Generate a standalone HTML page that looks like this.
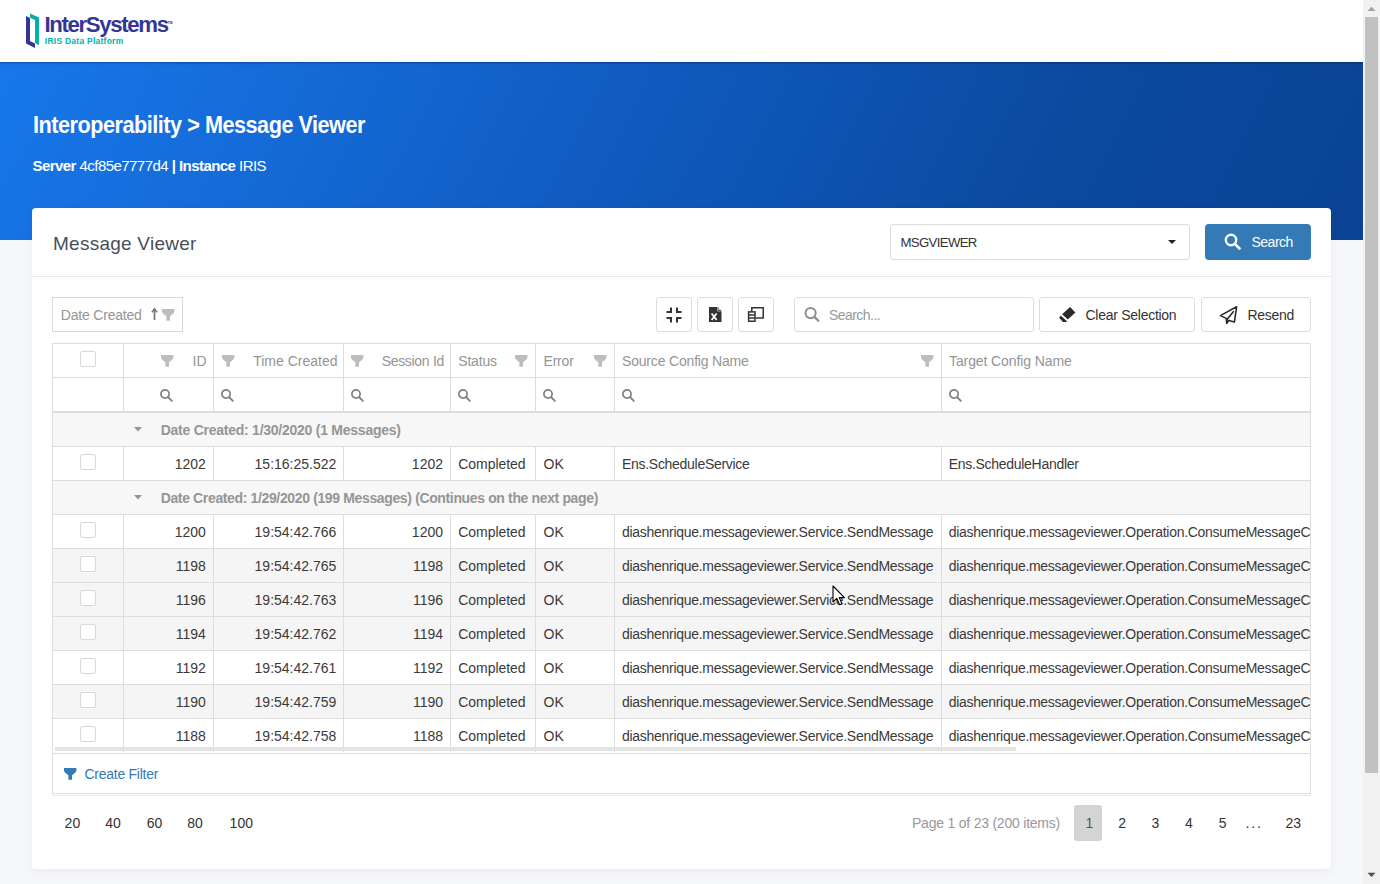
<!DOCTYPE html><html><head><meta charset="utf-8"><style>
*{box-sizing:border-box;margin:0;padding:0}
html,body{width:1380px;height:884px;overflow:hidden}
body{font-family:"Liberation Sans",sans-serif;background:#f5f7fa;position:relative;color:#3a3a3a}
.a{position:absolute}
.t{position:absolute;line-height:1;white-space:nowrap}
</style></head><body>
<div class="a" style="left:0px;top:0px;width:1363px;height:62px;background:#fff"></div>
<svg class="a" style="left:24px;top:12px" width="17" height="38" viewBox="0 0 17 38"><path d="M2,4 L6,6 L6,29 L11,31.6 L11,36 L2,31.6 Z" fill="#333695"/><path d="M6,1.6 L15,5.4 L15,33 L11,31 L11,8 L6,5.8 Z" fill="#00b2a9"/></svg>
<div class="t" style="left:44.5px;top:14.01px;font-size:22.2px;color:#333695;font-weight:700;letter-spacing:-1.35px;">InterSystems</div>
<div class="t" style="left:167.8px;top:22.12px;font-size:3.4px;color:#333695;font-weight:700;">TM</div>
<div class="t" style="left:44.8px;top:37.40px;font-size:8.5px;color:#00b2a9;font-weight:700;letter-spacing:0.25px;">IRIS Data Platform</div>
<div class="a" style="left:0px;top:62px;width:1363px;height:178px;background:linear-gradient(117deg,#1777e9 0%,#1468d4 25%,#0f58bb 50%,#0b4aa0 75%,#0a4393 100%)"></div>
<div class="a" style="left:0px;top:62px;width:1363px;height:3px;background:linear-gradient(rgba(0,0,0,.25),rgba(0,0,0,0))"></div>
<div class="t" style="left:32.5px;top:113.63px;font-size:23px;color:#fff;font-weight:700;letter-spacing:-0.5px;transform:scaleX(0.94);transform-origin:0 0;">Interoperability &gt; Message Viewer</div>
<div class="t" style="left:32.5px;top:158.30px;font-size:15px;color:#fff;letter-spacing:-0.55px;"><b>Server</b> 4cf85e7777d4 <b>|</b> <b>Instance</b> IRIS</div>
<div class="a" style="left:32px;top:208px;width:1299px;height:661px;background:#fff;border-radius:4px;box-shadow:0 3px 10px rgba(0,0,0,.05)"></div>
<div class="t" style="left:53px;top:233.62px;font-size:19px;color:#4a4f57;letter-spacing:0.25px;">Message Viewer</div>
<div class="a" style="left:32px;top:276px;width:1299px;height:1px;background:#e9e9e9"></div>
<div class="a" style="left:890px;top:224px;width:300px;height:36px;border:1px solid #ddd;border-radius:3px;background:#fff"></div>
<div class="t" style="left:900.5px;top:235.63px;font-size:13.2px;color:#333;letter-spacing:-0.65px;">MSGVIEWER</div>
<svg class="a" style="left:1168px;top:240px" width="8" height="4" viewBox="0 0 8 4"><path d="M0,0 H8 L4,4 Z" fill="#222"/></svg>
<div class="a" style="left:1205px;top:224px;width:106px;height:36px;background:#337ab7;border-radius:4px"></div>
<svg class="a" style="left:1224px;top:233px" width="17" height="17" viewBox="0 0 17 17"><circle cx="7" cy="7" r="5.2" fill="none" stroke="#fff" stroke-width="2.4"/><path d="M10.8,10.8 L15.5,15.5" stroke="#fff" stroke-width="2.6" stroke-linecap="round"/></svg>
<div class="t" style="left:1251.5px;top:235.15px;font-size:14px;color:#fff;letter-spacing:-0.5px;">Search</div>
<div class="a" style="left:52px;top:297px;width:131px;height:35px;border:1px solid #d8d8d8;background:#fff"></div>
<div class="t" style="left:60.8px;top:307.95px;font-size:14px;color:#959595;letter-spacing:-0.2px;">Date Created</div>
<svg class="a" style="left:150px;top:307px" width="9" height="14" viewBox="0 0 9 14"><path d="M4.5,2.5 V13" stroke="#777" stroke-width="1.7"/><path d="M1.9,5.2 L4.5,1.8 L7.1,5.2" fill="none" stroke="#777" stroke-width="1.6"/></svg>
<svg class="a" style="left:162px;top:309px" width="13" height="12" viewBox="0 0 13 12"><path d="M0,0 H12.4 V2.9 Q11.6,4.6 8,7.2 V11.7 H4.4 V7.2 Q0.8,4.6 0,2.9 Z" fill="#bdbdbd"/></svg>
<div class="a" style="left:656px;top:297px;width:36px;height:35px;border:1px solid #ddd;border-radius:3px;background:#fff"></div>
<div class="a" style="left:697px;top:297px;width:36px;height:35px;border:1px solid #ddd;border-radius:3px;background:#fff"></div>
<div class="a" style="left:738px;top:297px;width:36px;height:35px;border:1px solid #ddd;border-radius:3px;background:#fff"></div>
<svg class="a" style="left:666px;top:307px" width="16" height="16" viewBox="0 0 16 16"><g fill="none" stroke="#333" stroke-width="2"><path d="M5,0.5 V5 H0.5"/><path d="M11,0.5 V5 H15.5"/><path d="M5,15.5 V11 H0.5"/><path d="M11,15.5 V11 H15.5"/></g></svg>
<svg class="a" style="left:709px;top:307px" width="13" height="15" viewBox="0 0 13 15"><path d="M0,0 H8.5 L12.5,4 V15 H0 Z" fill="#333"/><path d="M8.5,0 V4 H12.5" fill="#fff" stroke="#fff" stroke-width="0.8"/><path d="M9,0.5 V3.6 H12" fill="none" stroke="#333" stroke-width="1"/><path d="M2.6,6.5 L7.6,13 M7.6,6.5 L2.6,13" stroke="#fff" stroke-width="1.8"/></svg>
<svg class="a" style="left:747px;top:306px" width="17" height="17" viewBox="0 0 17 17"><g fill="none" stroke="#333" stroke-width="1.5"><path d="M4.8,5.4 V1.8 H16.2 V12 H8.6"/><rect x="1.6" y="5.9" width="6.4" height="9.3"/><path d="M1.6,9 H8 M1.6,12.1 H8"/></g></svg>
<div class="a" style="left:794px;top:297px;width:240px;height:35px;border:1px solid #ddd;border-radius:3px;background:#fff"></div>
<svg class="a" style="left:804px;top:306px" width="16" height="17" viewBox="0 0 16 17"><circle cx="6.6" cy="7.1" r="5.1" fill="none" stroke="#8e8e8e" stroke-width="2"/><path d="M10.4,10.9 L14.3,14.8" stroke="#8e8e8e" stroke-width="2.2" stroke-linecap="round"/></svg>
<div class="t" style="left:829px;top:308.15px;font-size:14px;color:#999;letter-spacing:-0.55px;">Search...</div>
<div class="a" style="left:1039px;top:297px;width:156px;height:35px;border:1px solid #ddd;border-radius:3px;background:#fff"></div>
<svg class="a" style="left:1058px;top:306px" width="19" height="17" viewBox="0 0 19 17"><path d="M12.05,0.97 L17.4,6.5 L9.8,13.6 L4.1,8.3 Z" fill="#2b2b2b"/><path d="M1,11.4 L2.9,9.8 L8.2,14.6 L8.9,15.9 L4.8,15.9 Z" fill="#2b2b2b"/></svg>
<div class="t" style="left:1085.5px;top:308.15px;font-size:14px;color:#333;letter-spacing:-0.27px;">Clear Selection</div>
<div class="a" style="left:1201px;top:297px;width:110px;height:35px;border:1px solid #ddd;border-radius:3px;background:#fff"></div>
<svg class="a" style="left:1219px;top:305px" width="20" height="20" viewBox="0 0 20 20"><g fill="none" stroke="#2b2b2b" stroke-width="1.6" stroke-linejoin="round" stroke-linecap="round"><path d="M17.6,1.8 L1.4,10.6 L7.2,13.4 L7.7,18.2 L10,15.4 L15.4,17.1 Z"/><path d="M14.3,6.7 L8.2,14.2 L7.7,18.2"/></g></svg>
<div class="t" style="left:1247.5px;top:308.15px;font-size:14px;color:#333;letter-spacing:-0.3px;">Resend</div>
<div class="a" style="left:52px;top:343px;width:1259px;height:70px;background:#fff"></div>
<div class="a" style="left:52px;top:343px;width:1259px;height:1px;background:#dddddd"></div>
<div class="a" style="left:52px;top:377px;width:1259px;height:1px;background:#dddddd"></div>
<div class="a" style="left:52px;top:411px;width:1259px;height:2px;background:#dddddd"></div>
<div class="a" style="left:52px;top:343px;width:1px;height:70px;background:#dddddd"></div>
<div class="a" style="left:123px;top:343px;width:1px;height:70px;background:#dddddd"></div>
<div class="a" style="left:213px;top:343px;width:1px;height:70px;background:#dddddd"></div>
<div class="a" style="left:343px;top:343px;width:1px;height:70px;background:#dddddd"></div>
<div class="a" style="left:450px;top:343px;width:1px;height:70px;background:#dddddd"></div>
<div class="a" style="left:535px;top:343px;width:1px;height:70px;background:#dddddd"></div>
<div class="a" style="left:614px;top:343px;width:1px;height:70px;background:#dddddd"></div>
<div class="a" style="left:941px;top:343px;width:1px;height:70px;background:#dddddd"></div>
<div class="a" style="left:80px;top:351px;width:16px;height:16px;border:1px solid #d9d9d9;border-radius:2px;background:#fff"></div>
<svg class="a" style="left:160.5px;top:355px" width="13" height="12" viewBox="0 0 13 12"><path d="M0,0 H12.4 V2.9 Q11.6,4.6 8,7.2 V11.7 H4.4 V7.2 Q0.8,4.6 0,2.9 Z" fill="#bdbdbd"/></svg>
<div class="t" style="right:1173.5px;top:354.15px;font-size:14px;color:#959595;">ID</div>
<svg class="a" style="left:221.5px;top:355px" width="13" height="12" viewBox="0 0 13 12"><path d="M0,0 H12.4 V2.9 Q11.6,4.6 8,7.2 V11.7 H4.4 V7.2 Q0.8,4.6 0,2.9 Z" fill="#bdbdbd"/></svg>
<div class="t" style="right:1042.5px;top:354.15px;font-size:14px;color:#959595;">Time Created</div>
<svg class="a" style="left:351.3px;top:355px" width="13" height="12" viewBox="0 0 13 12"><path d="M0,0 H12.4 V2.9 Q11.6,4.6 8,7.2 V11.7 H4.4 V7.2 Q0.8,4.6 0,2.9 Z" fill="#bdbdbd"/></svg>
<div class="t" style="right:936px;top:354.15px;font-size:14px;color:#959595;letter-spacing:-0.3px;">Session Id</div>
<div class="t" style="left:458.3px;top:354.15px;font-size:14px;color:#959595;letter-spacing:-0.2px;">Status</div>
<svg class="a" style="left:514.8px;top:355px" width="13" height="12" viewBox="0 0 13 12"><path d="M0,0 H12.4 V2.9 Q11.6,4.6 8,7.2 V11.7 H4.4 V7.2 Q0.8,4.6 0,2.9 Z" fill="#bdbdbd"/></svg>
<div class="t" style="left:543.5px;top:354.15px;font-size:14px;color:#959595;letter-spacing:-0.2px;">Error</div>
<svg class="a" style="left:593.5px;top:355px" width="13" height="12" viewBox="0 0 13 12"><path d="M0,0 H12.4 V2.9 Q11.6,4.6 8,7.2 V11.7 H4.4 V7.2 Q0.8,4.6 0,2.9 Z" fill="#bdbdbd"/></svg>
<div class="t" style="left:622px;top:354.15px;font-size:14px;color:#959595;letter-spacing:-0.18px;">Source Config Name</div>
<svg class="a" style="left:920.5px;top:355px" width="13" height="12" viewBox="0 0 13 12"><path d="M0,0 H12.4 V2.9 Q11.6,4.6 8,7.2 V11.7 H4.4 V7.2 Q0.8,4.6 0,2.9 Z" fill="#bdbdbd"/></svg>
<div class="t" style="left:949px;top:354.15px;font-size:14px;color:#959595;letter-spacing:-0.1px;">Target Config Name</div>
<svg class="a" style="left:159.5px;top:389px" width="13" height="13" viewBox="0 0 13 13"><circle cx="5" cy="5" r="4.1" fill="none" stroke="#808080" stroke-width="1.7"/><path d="M8,8 L11.8,11.8" stroke="#808080" stroke-width="1.9" stroke-linecap="round"/></svg>
<svg class="a" style="left:221px;top:389px" width="13" height="13" viewBox="0 0 13 13"><circle cx="5" cy="5" r="4.1" fill="none" stroke="#808080" stroke-width="1.7"/><path d="M8,8 L11.8,11.8" stroke="#808080" stroke-width="1.9" stroke-linecap="round"/></svg>
<svg class="a" style="left:350.6px;top:389px" width="13" height="13" viewBox="0 0 13 13"><circle cx="5" cy="5" r="4.1" fill="none" stroke="#808080" stroke-width="1.7"/><path d="M8,8 L11.8,11.8" stroke="#808080" stroke-width="1.9" stroke-linecap="round"/></svg>
<svg class="a" style="left:457.8px;top:389px" width="13" height="13" viewBox="0 0 13 13"><circle cx="5" cy="5" r="4.1" fill="none" stroke="#808080" stroke-width="1.7"/><path d="M8,8 L11.8,11.8" stroke="#808080" stroke-width="1.9" stroke-linecap="round"/></svg>
<svg class="a" style="left:542.6px;top:389px" width="13" height="13" viewBox="0 0 13 13"><circle cx="5" cy="5" r="4.1" fill="none" stroke="#808080" stroke-width="1.7"/><path d="M8,8 L11.8,11.8" stroke="#808080" stroke-width="1.9" stroke-linecap="round"/></svg>
<svg class="a" style="left:621.5px;top:389px" width="13" height="13" viewBox="0 0 13 13"><circle cx="5" cy="5" r="4.1" fill="none" stroke="#808080" stroke-width="1.7"/><path d="M8,8 L11.8,11.8" stroke="#808080" stroke-width="1.9" stroke-linecap="round"/></svg>
<svg class="a" style="left:948.5px;top:389px" width="13" height="13" viewBox="0 0 13 13"><circle cx="5" cy="5" r="4.1" fill="none" stroke="#808080" stroke-width="1.7"/><path d="M8,8 L11.8,11.8" stroke="#808080" stroke-width="1.9" stroke-linecap="round"/></svg>
<div class="a" style="left:52px;top:413px;width:1259px;height:339px;overflow:hidden;background:#fff">
<div class="a" style="left:0px;top:0px;width:1259px;height:34px;background:#f7f7f7"></div>
<div class="a" style="left:0px;top:33px;width:1259px;height:1px;background:#dddddd"></div>
<svg class="a" style="left:82.3px;top:13.7px" width="8" height="5" viewBox="0 0 8 5"><path d="M0,0 H8 L4,4.6 Z" fill="#959595"/></svg>
<div class="t" style="left:108.7px;top:10.35px;font-size:14px;color:#959595;font-weight:700;letter-spacing:-0.25px">Date Created: 1/30/2020 (1 Messages)</div>
<div class="a" style="left:0px;top:34px;width:1259px;height:34px;background:#fff"></div>
<div class="a" style="left:0px;top:67px;width:1259px;height:1px;background:#dddddd"></div>
<div class="a" style="left:71px;top:34px;width:1px;height:34px;background:#dddddd"></div>
<div class="a" style="left:161px;top:34px;width:1px;height:34px;background:#dddddd"></div>
<div class="a" style="left:291px;top:34px;width:1px;height:34px;background:#dddddd"></div>
<div class="a" style="left:398px;top:34px;width:1px;height:34px;background:#dddddd"></div>
<div class="a" style="left:483px;top:34px;width:1px;height:34px;background:#dddddd"></div>
<div class="a" style="left:562px;top:34px;width:1px;height:34px;background:#dddddd"></div>
<div class="a" style="left:889px;top:34px;width:1px;height:34px;background:#dddddd"></div>
<div class="a" style="left:28px;top:41px;width:16px;height:16px;border:1px solid #d9d9d9;border-radius:2px;background:#fff"></div>
<div class="t" style="right:1105.2px;top:44.25px;font-size:14px">1202</div>
<div class="t" style="right:974.7px;top:44.25px;font-size:14px">15:16:25.522</div>
<div class="t" style="right:868.0px;top:44.25px;font-size:14px">1202</div>
<div class="t" style="left:406.3px;top:44.25px;font-size:14px;letter-spacing:-0.05px">Completed</div>
<div class="t" style="left:491.5px;top:44.25px;font-size:14px">OK</div>
<div class="t" style="left:570px;top:44.25px;font-size:14px;letter-spacing:-0.29px">Ens.ScheduleService</div>
<div class="a" style="left:889px;top:34px;width:369px;height:33px;overflow:hidden"><div class="t" style="left:7.7px;top:10.25px;font-size:14px;letter-spacing:-0.29px">Ens.ScheduleHandler</div></div>
<div class="a" style="left:0px;top:68px;width:1259px;height:34px;background:#f7f7f7"></div>
<div class="a" style="left:0px;top:101px;width:1259px;height:1px;background:#dddddd"></div>
<svg class="a" style="left:82.3px;top:81.7px" width="8" height="5" viewBox="0 0 8 5"><path d="M0,0 H8 L4,4.6 Z" fill="#959595"/></svg>
<div class="t" style="left:108.7px;top:78.35px;font-size:14px;color:#959595;font-weight:700;letter-spacing:-0.36px">Date Created: 1/29/2020 (199 Messages) (Continues on the next page)</div>
<div class="a" style="left:0px;top:102px;width:1259px;height:34px;background:#fff"></div>
<div class="a" style="left:0px;top:135px;width:1259px;height:1px;background:#dddddd"></div>
<div class="a" style="left:71px;top:102px;width:1px;height:34px;background:#dddddd"></div>
<div class="a" style="left:161px;top:102px;width:1px;height:34px;background:#dddddd"></div>
<div class="a" style="left:291px;top:102px;width:1px;height:34px;background:#dddddd"></div>
<div class="a" style="left:398px;top:102px;width:1px;height:34px;background:#dddddd"></div>
<div class="a" style="left:483px;top:102px;width:1px;height:34px;background:#dddddd"></div>
<div class="a" style="left:562px;top:102px;width:1px;height:34px;background:#dddddd"></div>
<div class="a" style="left:889px;top:102px;width:1px;height:34px;background:#dddddd"></div>
<div class="a" style="left:28px;top:109px;width:16px;height:16px;border:1px solid #d9d9d9;border-radius:2px;background:#fff"></div>
<div class="t" style="right:1105.2px;top:112.25px;font-size:14px">1200</div>
<div class="t" style="right:974.7px;top:112.25px;font-size:14px">19:54:42.766</div>
<div class="t" style="right:868.0px;top:112.25px;font-size:14px">1200</div>
<div class="t" style="left:406.3px;top:112.25px;font-size:14px;letter-spacing:-0.05px">Completed</div>
<div class="t" style="left:491.5px;top:112.25px;font-size:14px">OK</div>
<div class="t" style="left:570px;top:112.25px;font-size:14px;letter-spacing:-0.29px">diashenrique.messageviewer.Service.SendMessage</div>
<div class="a" style="left:889px;top:102px;width:369px;height:33px;overflow:hidden"><div class="t" style="left:7.7px;top:10.25px;font-size:14px;letter-spacing:-0.29px">diashenrique.messageviewer.Operation.ConsumeMessageClass</div></div>
<div class="a" style="left:0px;top:136px;width:1259px;height:34px;background:#f5f5f5"></div>
<div class="a" style="left:0px;top:169px;width:1259px;height:1px;background:#dddddd"></div>
<div class="a" style="left:71px;top:136px;width:1px;height:34px;background:#dddddd"></div>
<div class="a" style="left:161px;top:136px;width:1px;height:34px;background:#dddddd"></div>
<div class="a" style="left:291px;top:136px;width:1px;height:34px;background:#dddddd"></div>
<div class="a" style="left:398px;top:136px;width:1px;height:34px;background:#dddddd"></div>
<div class="a" style="left:483px;top:136px;width:1px;height:34px;background:#dddddd"></div>
<div class="a" style="left:562px;top:136px;width:1px;height:34px;background:#dddddd"></div>
<div class="a" style="left:889px;top:136px;width:1px;height:34px;background:#dddddd"></div>
<div class="a" style="left:28px;top:143px;width:16px;height:16px;border:1px solid #d9d9d9;border-radius:2px;background:#fff"></div>
<div class="t" style="right:1105.2px;top:146.25px;font-size:14px">1198</div>
<div class="t" style="right:974.7px;top:146.25px;font-size:14px">19:54:42.765</div>
<div class="t" style="right:868.0px;top:146.25px;font-size:14px">1198</div>
<div class="t" style="left:406.3px;top:146.25px;font-size:14px;letter-spacing:-0.05px">Completed</div>
<div class="t" style="left:491.5px;top:146.25px;font-size:14px">OK</div>
<div class="t" style="left:570px;top:146.25px;font-size:14px;letter-spacing:-0.29px">diashenrique.messageviewer.Service.SendMessage</div>
<div class="a" style="left:889px;top:136px;width:369px;height:33px;overflow:hidden"><div class="t" style="left:7.7px;top:10.25px;font-size:14px;letter-spacing:-0.29px">diashenrique.messageviewer.Operation.ConsumeMessageClass</div></div>
<div class="a" style="left:0px;top:170px;width:1259px;height:34px;background:#f5f5f5"></div>
<div class="a" style="left:0px;top:203px;width:1259px;height:1px;background:#dddddd"></div>
<div class="a" style="left:71px;top:170px;width:1px;height:34px;background:#dddddd"></div>
<div class="a" style="left:161px;top:170px;width:1px;height:34px;background:#dddddd"></div>
<div class="a" style="left:291px;top:170px;width:1px;height:34px;background:#dddddd"></div>
<div class="a" style="left:398px;top:170px;width:1px;height:34px;background:#dddddd"></div>
<div class="a" style="left:483px;top:170px;width:1px;height:34px;background:#dddddd"></div>
<div class="a" style="left:562px;top:170px;width:1px;height:34px;background:#dddddd"></div>
<div class="a" style="left:889px;top:170px;width:1px;height:34px;background:#dddddd"></div>
<div class="a" style="left:28px;top:177px;width:16px;height:16px;border:1px solid #d9d9d9;border-radius:2px;background:#fff"></div>
<div class="t" style="right:1105.2px;top:180.25px;font-size:14px">1196</div>
<div class="t" style="right:974.7px;top:180.25px;font-size:14px">19:54:42.763</div>
<div class="t" style="right:868.0px;top:180.25px;font-size:14px">1196</div>
<div class="t" style="left:406.3px;top:180.25px;font-size:14px;letter-spacing:-0.05px">Completed</div>
<div class="t" style="left:491.5px;top:180.25px;font-size:14px">OK</div>
<div class="t" style="left:570px;top:180.25px;font-size:14px;letter-spacing:-0.29px">diashenrique.messageviewer.Service.SendMessage</div>
<div class="a" style="left:889px;top:170px;width:369px;height:33px;overflow:hidden"><div class="t" style="left:7.7px;top:10.25px;font-size:14px;letter-spacing:-0.29px">diashenrique.messageviewer.Operation.ConsumeMessageClass</div></div>
<div class="a" style="left:0px;top:204px;width:1259px;height:34px;background:#f5f5f5"></div>
<div class="a" style="left:0px;top:237px;width:1259px;height:1px;background:#dddddd"></div>
<div class="a" style="left:71px;top:204px;width:1px;height:34px;background:#dddddd"></div>
<div class="a" style="left:161px;top:204px;width:1px;height:34px;background:#dddddd"></div>
<div class="a" style="left:291px;top:204px;width:1px;height:34px;background:#dddddd"></div>
<div class="a" style="left:398px;top:204px;width:1px;height:34px;background:#dddddd"></div>
<div class="a" style="left:483px;top:204px;width:1px;height:34px;background:#dddddd"></div>
<div class="a" style="left:562px;top:204px;width:1px;height:34px;background:#dddddd"></div>
<div class="a" style="left:889px;top:204px;width:1px;height:34px;background:#dddddd"></div>
<div class="a" style="left:28px;top:211px;width:16px;height:16px;border:1px solid #d9d9d9;border-radius:2px;background:#fff"></div>
<div class="t" style="right:1105.2px;top:214.25px;font-size:14px">1194</div>
<div class="t" style="right:974.7px;top:214.25px;font-size:14px">19:54:42.762</div>
<div class="t" style="right:868.0px;top:214.25px;font-size:14px">1194</div>
<div class="t" style="left:406.3px;top:214.25px;font-size:14px;letter-spacing:-0.05px">Completed</div>
<div class="t" style="left:491.5px;top:214.25px;font-size:14px">OK</div>
<div class="t" style="left:570px;top:214.25px;font-size:14px;letter-spacing:-0.29px">diashenrique.messageviewer.Service.SendMessage</div>
<div class="a" style="left:889px;top:204px;width:369px;height:33px;overflow:hidden"><div class="t" style="left:7.7px;top:10.25px;font-size:14px;letter-spacing:-0.29px">diashenrique.messageviewer.Operation.ConsumeMessageClass</div></div>
<div class="a" style="left:0px;top:238px;width:1259px;height:34px;background:#fff"></div>
<div class="a" style="left:0px;top:271px;width:1259px;height:1px;background:#dddddd"></div>
<div class="a" style="left:71px;top:238px;width:1px;height:34px;background:#dddddd"></div>
<div class="a" style="left:161px;top:238px;width:1px;height:34px;background:#dddddd"></div>
<div class="a" style="left:291px;top:238px;width:1px;height:34px;background:#dddddd"></div>
<div class="a" style="left:398px;top:238px;width:1px;height:34px;background:#dddddd"></div>
<div class="a" style="left:483px;top:238px;width:1px;height:34px;background:#dddddd"></div>
<div class="a" style="left:562px;top:238px;width:1px;height:34px;background:#dddddd"></div>
<div class="a" style="left:889px;top:238px;width:1px;height:34px;background:#dddddd"></div>
<div class="a" style="left:28px;top:245px;width:16px;height:16px;border:1px solid #d9d9d9;border-radius:2px;background:#fff"></div>
<div class="t" style="right:1105.2px;top:248.25px;font-size:14px">1192</div>
<div class="t" style="right:974.7px;top:248.25px;font-size:14px">19:54:42.761</div>
<div class="t" style="right:868.0px;top:248.25px;font-size:14px">1192</div>
<div class="t" style="left:406.3px;top:248.25px;font-size:14px;letter-spacing:-0.05px">Completed</div>
<div class="t" style="left:491.5px;top:248.25px;font-size:14px">OK</div>
<div class="t" style="left:570px;top:248.25px;font-size:14px;letter-spacing:-0.29px">diashenrique.messageviewer.Service.SendMessage</div>
<div class="a" style="left:889px;top:238px;width:369px;height:33px;overflow:hidden"><div class="t" style="left:7.7px;top:10.25px;font-size:14px;letter-spacing:-0.29px">diashenrique.messageviewer.Operation.ConsumeMessageClass</div></div>
<div class="a" style="left:0px;top:272px;width:1259px;height:34px;background:#f5f5f5"></div>
<div class="a" style="left:0px;top:305px;width:1259px;height:1px;background:#dddddd"></div>
<div class="a" style="left:71px;top:272px;width:1px;height:34px;background:#dddddd"></div>
<div class="a" style="left:161px;top:272px;width:1px;height:34px;background:#dddddd"></div>
<div class="a" style="left:291px;top:272px;width:1px;height:34px;background:#dddddd"></div>
<div class="a" style="left:398px;top:272px;width:1px;height:34px;background:#dddddd"></div>
<div class="a" style="left:483px;top:272px;width:1px;height:34px;background:#dddddd"></div>
<div class="a" style="left:562px;top:272px;width:1px;height:34px;background:#dddddd"></div>
<div class="a" style="left:889px;top:272px;width:1px;height:34px;background:#dddddd"></div>
<div class="a" style="left:28px;top:279px;width:16px;height:16px;border:1px solid #d9d9d9;border-radius:2px;background:#fff"></div>
<div class="t" style="right:1105.2px;top:282.25px;font-size:14px">1190</div>
<div class="t" style="right:974.7px;top:282.25px;font-size:14px">19:54:42.759</div>
<div class="t" style="right:868.0px;top:282.25px;font-size:14px">1190</div>
<div class="t" style="left:406.3px;top:282.25px;font-size:14px;letter-spacing:-0.05px">Completed</div>
<div class="t" style="left:491.5px;top:282.25px;font-size:14px">OK</div>
<div class="t" style="left:570px;top:282.25px;font-size:14px;letter-spacing:-0.29px">diashenrique.messageviewer.Service.SendMessage</div>
<div class="a" style="left:889px;top:272px;width:369px;height:33px;overflow:hidden"><div class="t" style="left:7.7px;top:10.25px;font-size:14px;letter-spacing:-0.29px">diashenrique.messageviewer.Operation.ConsumeMessageClass</div></div>
<div class="a" style="left:0px;top:306px;width:1259px;height:34px;background:#fff"></div>
<div class="a" style="left:0px;top:339px;width:1259px;height:1px;background:#dddddd"></div>
<div class="a" style="left:71px;top:306px;width:1px;height:34px;background:#dddddd"></div>
<div class="a" style="left:161px;top:306px;width:1px;height:34px;background:#dddddd"></div>
<div class="a" style="left:291px;top:306px;width:1px;height:34px;background:#dddddd"></div>
<div class="a" style="left:398px;top:306px;width:1px;height:34px;background:#dddddd"></div>
<div class="a" style="left:483px;top:306px;width:1px;height:34px;background:#dddddd"></div>
<div class="a" style="left:562px;top:306px;width:1px;height:34px;background:#dddddd"></div>
<div class="a" style="left:889px;top:306px;width:1px;height:34px;background:#dddddd"></div>
<div class="a" style="left:28px;top:313px;width:16px;height:16px;border:1px solid #d9d9d9;border-radius:2px;background:#fff"></div>
<div class="t" style="right:1105.2px;top:316.25px;font-size:14px">1188</div>
<div class="t" style="right:974.7px;top:316.25px;font-size:14px">19:54:42.758</div>
<div class="t" style="right:868.0px;top:316.25px;font-size:14px">1188</div>
<div class="t" style="left:406.3px;top:316.25px;font-size:14px;letter-spacing:-0.05px">Completed</div>
<div class="t" style="left:491.5px;top:316.25px;font-size:14px">OK</div>
<div class="t" style="left:570px;top:316.25px;font-size:14px;letter-spacing:-0.29px">diashenrique.messageviewer.Service.SendMessage</div>
<div class="a" style="left:889px;top:306px;width:369px;height:33px;overflow:hidden"><div class="t" style="left:7.7px;top:10.25px;font-size:14px;letter-spacing:-0.29px">diashenrique.messageviewer.Operation.ConsumeMessageClass</div></div>
<div class="a" style="left:3px;top:334px;width:961px;height:4px;background:#e3e3e3"></div>
</div>
<div class="a" style="left:52px;top:413px;width:1px;height:381px;background:#dddddd"></div>
<div class="a" style="left:1310px;top:343px;width:1px;height:451px;background:#dddddd"></div>
<div class="a" style="left:52px;top:753px;width:1259px;height:1px;background:#dddddd"></div>
<div class="a" style="left:52px;top:793px;width:1259px;height:1px;background:#dddddd"></div>
<div class="a" style="left:52px;top:795px;width:1259px;height:1px;background:#e6e6e6"></div>
<svg class="a" style="left:63.8px;top:768px" width="13" height="12" viewBox="0 0 13 12"><path d="M0,0 H12.4 V2.9 Q11.6,4.6 8,7.2 V11.7 H4.4 V7.2 Q0.8,4.6 0,2.9 Z" fill="#337ab7"/></svg>
<div class="t" style="left:84.4px;top:767.35px;font-size:14px;color:#337ab7;letter-spacing:-0.25px;">Create Filter</div>
<div class="t" style="left:64.6px;top:816.05px;font-size:14px;color:#333;">20</div>
<div class="t" style="left:105.2px;top:816.05px;font-size:14px;color:#333;">40</div>
<div class="t" style="left:146.7px;top:816.05px;font-size:14px;color:#333;">60</div>
<div class="t" style="left:187.3px;top:816.05px;font-size:14px;color:#333;">80</div>
<div class="t" style="left:229.6px;top:816.05px;font-size:14px;color:#333;">100</div>
<div class="t" style="left:912px;top:816.05px;font-size:14px;color:#999;letter-spacing:-0.22px;">Page 1 of 23 (200 items)</div>
<div class="a" style="left:1074px;top:805px;width:28px;height:36px;background:#d4d4d4;border-radius:3px"></div>
<div class="t" style="left:1085.6px;top:815.95px;font-size:14px;color:#555;">1</div>
<div class="t" style="left:1118.3px;top:815.95px;font-size:14px;color:#333;">2</div>
<div class="t" style="left:1151.6px;top:815.95px;font-size:14px;color:#333;">3</div>
<div class="t" style="left:1185.1px;top:815.95px;font-size:14px;color:#333;">4</div>
<div class="t" style="left:1218.7px;top:815.95px;font-size:14px;color:#333;">5</div>
<div class="t" style="left:1285.5px;top:815.95px;font-size:14px;color:#333;">23</div>
<div class="t" style="left:1245.5px;top:815.95px;font-size:14px;color:#333;letter-spacing:1.9px;">...</div>
<svg class="a" style="left:832px;top:585px" width="14" height="22" viewBox="0 0 14 22"><path d="M1,1 L1,17 L4.8,13.4 L7.6,19.8 L10,18.8 L7.3,12.6 L12.4,12.6 Z" fill="#fff" stroke="#000" stroke-width="1.1" stroke-linejoin="round"/></svg>
<div class="a" style="left:1363px;top:0px;width:17px;height:884px;background:#f1f1f1"></div>
<div class="a" style="left:1365px;top:17px;width:13px;height:756px;background:#c1c1c1"></div>
<svg class="a" style="left:1367px;top:6px" width="9" height="6" viewBox="0 0 9 6"><path d="M0.5,5 L4.5,0.8 L8.5,5 Z" fill="#a3a3a3"/></svg>
<svg class="a" style="left:1367px;top:872px" width="9" height="6" viewBox="0 0 9 6"><path d="M0.5,0.8 L4.5,5 L8.5,0.8 Z" fill="#505050"/></svg>
</body></html>
